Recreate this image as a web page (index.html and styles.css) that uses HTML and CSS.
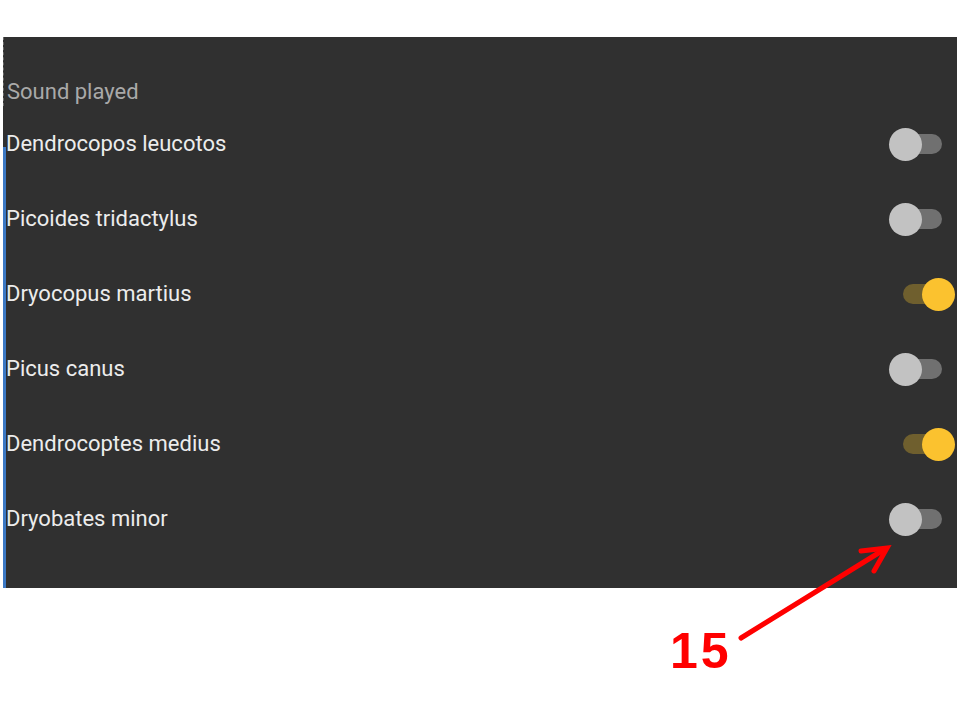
FILE: index.html
```html
<!DOCTYPE html>
<html lang="en">
<head>
    <meta charset="UTF-8">
    <meta name="viewport" content="width=device-width, initial-scale=1.0">
    <title>Sound played</title>
    <link rel="stylesheet" href="styles.css">
</head>
<body>
    <div class="page">
        <div class="panel">
            <div class="header">Sound played</div>
            <div class="row">
                <span class="label">Dendrocopos leucotos</span>
                <span class="switch"><span class="track"></span><span class="knob"></span></span>
            </div>
            <div class="row">
                <span class="label">Picoides tridactylus</span>
                <span class="switch"><span class="track"></span><span class="knob"></span></span>
            </div>
            <div class="row">
                <span class="label">Dryocopus martius</span>
                <span class="switch on"><span class="track"></span><span class="knob"></span></span>
            </div>
            <div class="row">
                <span class="label">Picus canus</span>
                <span class="switch"><span class="track"></span><span class="knob"></span></span>
            </div>
            <div class="row">
                <span class="label">Dendrocoptes medius</span>
                <span class="switch on"><span class="track"></span><span class="knob"></span></span>
            </div>
            <div class="row">
                <span class="label">Dryobates minor</span>
                <span class="switch"><span class="track"></span><span class="knob"></span></span>
            </div>
        </div>
        <div class="callout">15</div>
    </div>

    <!-- annotation arrow pointing at the last switch -->
    <svg class="arrow" width="960" height="720" viewBox="0 0 960 720">
        <line x1="741" y1="638" x2="885" y2="549" stroke="#ff0000" stroke-width="5" stroke-linecap="round"/>
        <polyline points="861,551 887,548 874,571" fill="none" stroke="#ff0000" stroke-width="5" stroke-linecap="round" stroke-linejoin="miter"/>
    </svg>
</body>
</html>
```

FILE: styles.css
```css
body {
    margin: 0;
    background-color: #ffffff;
    font-family: Roboto, "Noto Sans", sans-serif;
}
.page {
    padding-top: 37px;
    padding-left: 3px;
}
.panel {
    position: relative;
    width: 954px;
    height: 551px;
    background-color: #303030;
    box-sizing: border-box;
}
/* blue focus bar down the left edge */
.panel::before {
    content: "";
    position: absolute;
    left: 0;
    top: 110px;
    bottom: 0;
    width: 3px;
    background-color: #3b78c4;
}
.header {
    height: 69px;
    box-sizing: border-box;
    padding: 43px 0 0 3px;
    line-height: 24px;
    font-size: 22px;
    color: #a9a9a9;
    border-left: 1px dashed #6a6a6a;
}
.row {
    display: flex;
    align-items: center;
    justify-content: space-between;
    height: 75px;
    padding-left: 3px;
}
.label {
    font-size: 22px;
    color: #ececec;
}
.switch {
    position: relative;
    width: 66px;
    height: 32px;
    margin-right: 2px;
}
.track {
    position: absolute;
    left: 5px;
    top: 6px;
    width: 48px;
    height: 20px;
    border-radius: 10px;
    background-color: #707070;
}
.knob {
    position: absolute;
    left: 0;
    top: 0;
    width: 33px;
    height: 33px;
    border-radius: 50%;
    background-color: #c2c2c2;
}
.switch.on .track {
    left: 14px;
    background-color: #6f5f2e;
}
.switch.on .knob {
    left: 33px;
    background-color: #fbc22f;
}
.callout {
    margin: 38px 0 0 667px;
    font-family: "Liberation Sans", Arial, sans-serif;
    font-weight: bold;
    font-size: 50px;
    line-height: 50px;
    letter-spacing: 3px;
    color: #ff0000;
}
.arrow {
    position: absolute;
    left: 0;
    top: 0;
    pointer-events: none;
}
```
